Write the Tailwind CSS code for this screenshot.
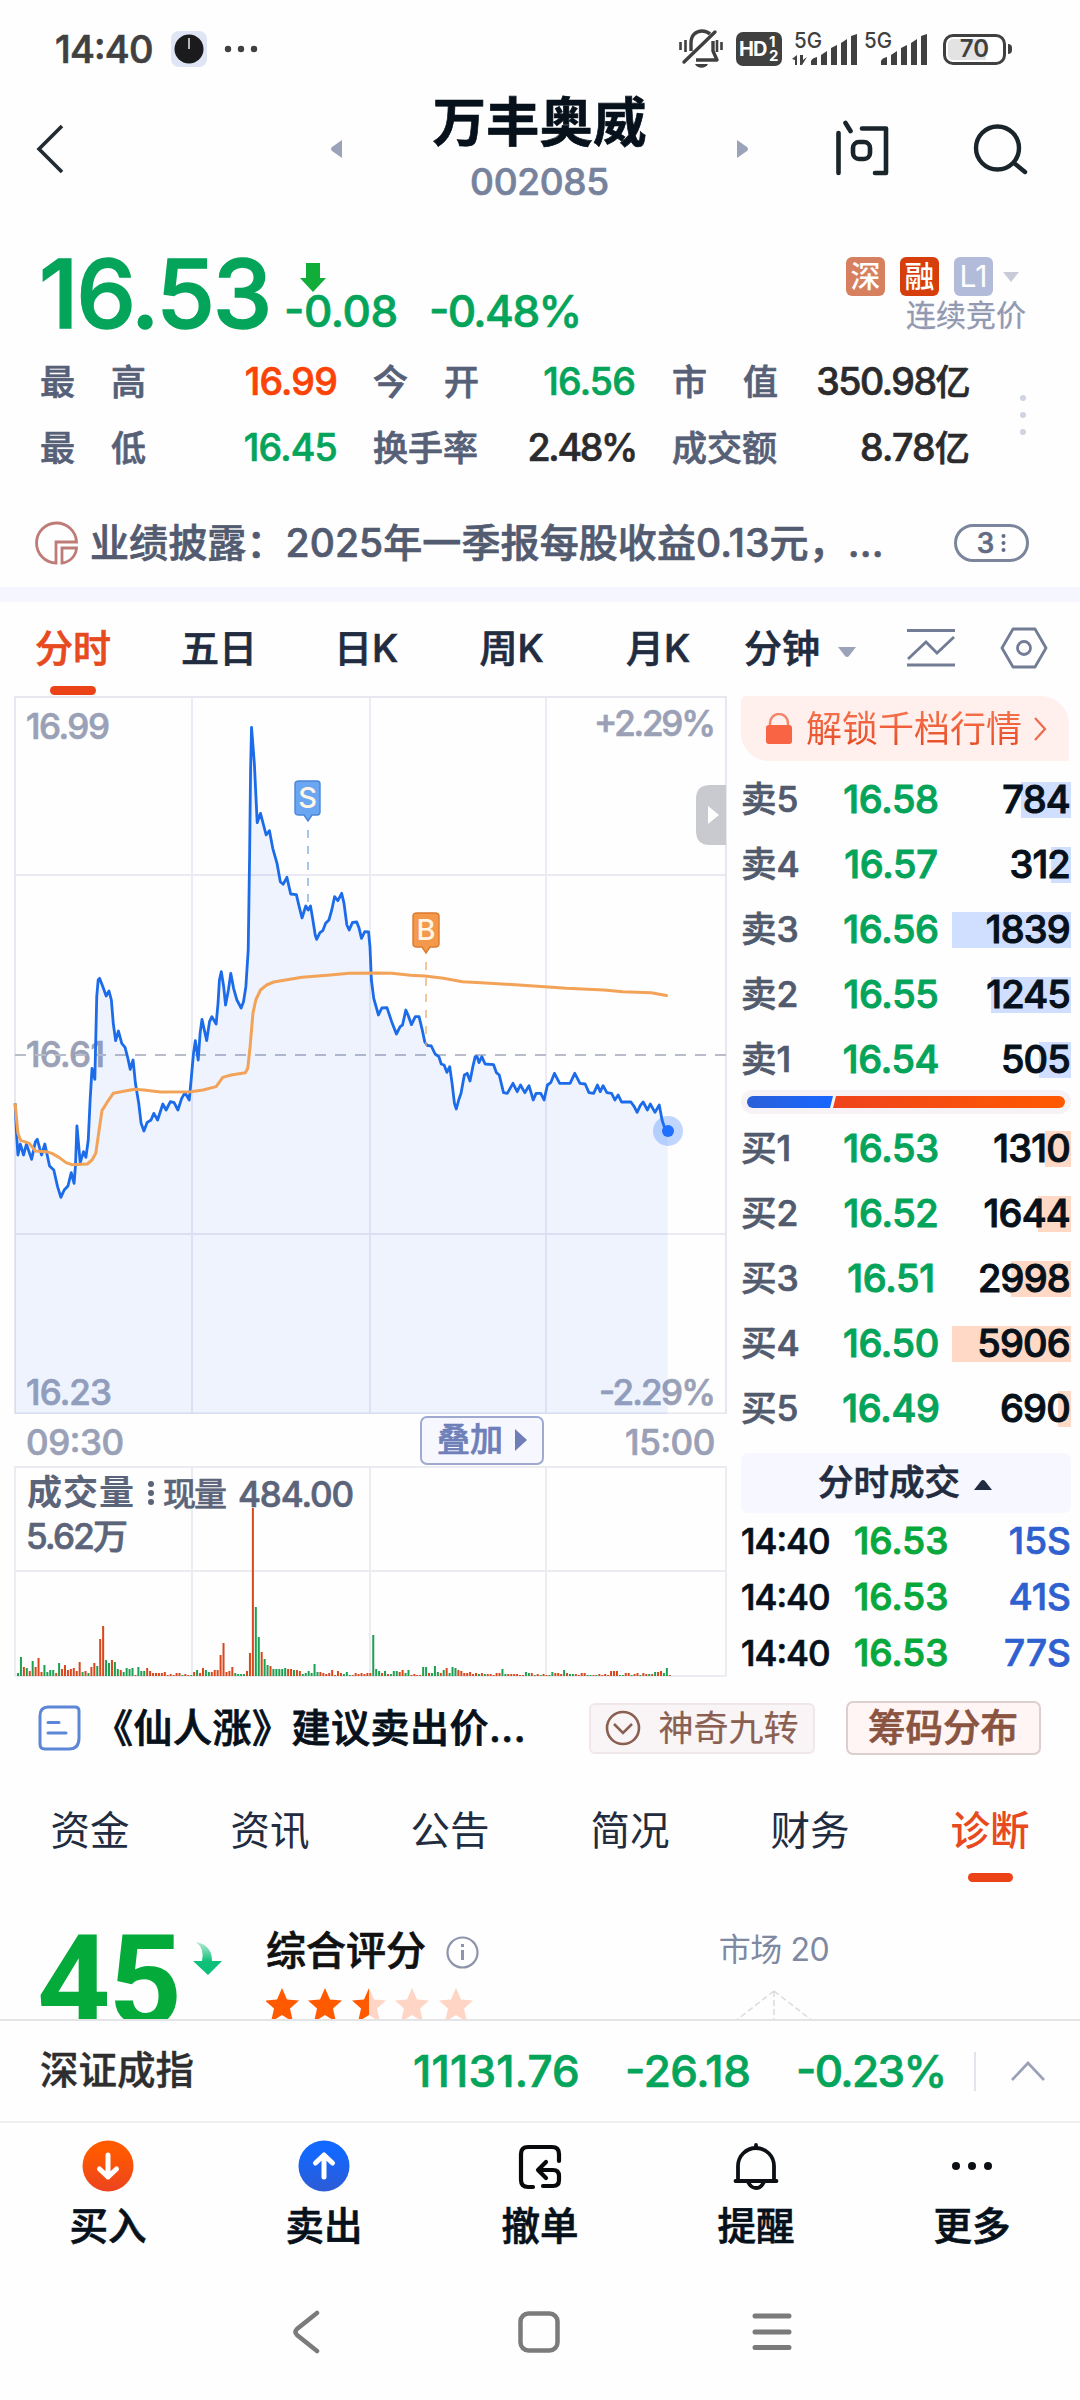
<!DOCTYPE html>
<html lang="zh-CN">
  <head>
    <meta charset="UTF-8" />
    <meta name="viewport" content="width=device-width, initial-scale=1.0" />
    <script src="https://cdn.jsdelivr.net/npm/@tailwindcss/browser@4"></script>
    <title>万丰奥威 002085</title>
  </head>

  <body
    class="w-[1080px] h-[2400px] overflow-hidden bg-[#fefefe] font-['Inter','Noto_Sans_CJK_SC',sans-serif] font-medium [-webkit-text-stroke:0.7px] [font-feature-settings:'case'] text-[#07111b] whitespace-nowrap"
  >
    <!-- Status bar -->
    <div class="h-[98px] pl-[55px] pr-[68px] flex items-center justify-between text-[#404040]">
      <div class="flex items-center">
        <span class="w-[115px] text-[38px] font-medium tracking-[-0.8px]">14:40</span>
        <svg class="w-[38px] h-[38px]" viewBox="0 0 38 38">
          <rect x="1" y="1" width="36" height="36" rx="8" fill="#dfe5f5" />
          <circle cx="19" cy="19" r="14.5" fill="#1b1b1d" />
          <path d="M19 19V8" stroke="#ddd" stroke-width="1.6" />
        </svg>
        <svg class="w-[34px] h-[8px] ml-[16px]" viewBox="0 0 34 8" fill="currentColor">
          <circle cx="4" cy="4" r="3.2" />
          <circle cx="17" cy="4" r="3.2" />
          <circle cx="30" cy="4" r="3.2" />
        </svg>
      </div>
      <div class="flex items-center [-webkit-text-stroke:0px]">
        <svg class="w-[44px] h-[40px]" viewBox="0 0 44 40" fill="none" stroke="currentColor" stroke-width="3.4">
          <path d="M12 22V14C12 6 17 2 23 2c3 0 6 1 8 3M34 12v10l4 9H17" stroke-linejoin="round" />
          <path d="M5 33L36 3" stroke-linecap="round" />
          <path d="M16 35h13c-2 5-11 5-13 0z" fill="currentColor" stroke="none" />
          <path d="M1.5 13v8M6.5 11v12M38 11v12M42.5 13v8" stroke-width="2.6" />
        </svg>
        <div class="w-[46px] h-[34px] ml-[13px] pl-[3px] rounded-[7px] bg-[#404040] text-white flex items-center">
          <span class="w-[30px] text-[20px] font-bold tracking-[-1px]">HD</span>
          <span class="text-[15px] font-bold leading-[14px]">1<br />2</span>
        </div>
        <svg class="w-[66px] h-[36px] ml-[10px] overflow-visible" viewBox="0 0 66 36" fill="currentColor">
          <text x="2" y="17" font-size="22" font-weight="500" textLength="28" lengthAdjust="spacingAndGlyphs">5G</text>
          <path d="M0 28l5-4v10H3v-5zM8 24h3v5l4-3-5 8H8z" />
          <path d="M19 34v-4q1-3 6-4v8zM29 34V24l6-4v14zM39 34V17l6-3v20zM49 34V12l6-4v26zM59 34V5l6-2v31z" />
        </svg>
        <svg class="w-[66px] h-[36px] ml-[4px] overflow-visible" viewBox="0 0 66 36" fill="currentColor">
          <text x="2" y="17" font-size="22" font-weight="500" textLength="28" lengthAdjust="spacingAndGlyphs">5G</text>
          <path d="M19 34v-4q1-3 6-4v8zM29 34V24l6-4v14zM39 34V17l6-3v20zM49 34V12l6-4v26zM59 34V5l6-2v31z" />
        </svg>
        <div class="w-[63px] h-[31px] ml-[15px] rounded-[10px] border-[3px] border-[#404040] flex items-center justify-center text-[24px] font-semibold bg-linear-to-r from-[#e3e3e3] from-70% to-white to-70% bg-clip-content p-[2px]">70</div>
        <div class="w-[4px] h-[10px] ml-[2px] rounded-r bg-[#404040]"></div>
      </div>
    </div>

    <!-- Header -->
    <header class="h-[132px] px-[36px] flex items-start">
      <svg class="w-[28px] h-[50px] mt-[26px]" viewBox="0 0 28 50" fill="none" stroke="#222b31" stroke-width="3.6">
        <path d="M26 2L3 25L26 48" />
      </svg>
      <svg class="w-[12px] h-[18px] mt-[42px] ml-[266px]" viewBox="0 0 12 18" fill="#9ba3b8"><path d="M12 0v18L2 11Q0 9 2 7z" /></svg>
      <div class="w-[395px] flex flex-col items-center">
        <h1 class="text-[53.5px] leading-[54px] mt-[-2px] font-bold">万丰奥威</h1>
        <span class="mt-[10px] text-[37px] leading-[44px] tracking-[-0.3px] text-[#77829d]">002085</span>
      </div>
      <svg class="w-[12px] h-[18px] mt-[42px]" viewBox="0 0 12 18" fill="#9ba3b8"><path d="M0 0v18l10-7Q12 9 10 7z" /></svg>
      <svg class="w-[54px] h-[56px] mt-[22px] ml-[86px]" viewBox="0 0 54 56" fill="none" stroke="#19252b" stroke-width="4.6" stroke-linecap="round" stroke-linejoin="round">
        <path d="M3.5 13v40M10.500 3l5 8M27 8.500h24V53H40" />
        <rect x="18" y="22" width="17" height="17" rx="6" />
      </svg>
      <svg class="w-[56px] h-[52px] mt-[25px] ml-[83px]" viewBox="0 0 56 52" fill="none" stroke="#19252b" stroke-width="4.4" stroke-linecap="round">
        <circle cx="25.5" cy="25" r="21.5" />
        <path d="M42 40l11 9" />
      </svg>
    </header>

    <!-- Quote -->
    <section class="h-[357px] pl-[40px] pr-[52px]">
      <div class="flex h-[114px]">
        <span class="w-[245px] mt-[16px] text-[95px] leading-[95px] font-medium [-webkit-text-stroke:1.5px] tracking-[-2.2px] ml-[-1px] text-[#05a45b]">16.53</span>
        <div class="text-[44px] leading-[44px] text-[#05a45b]">
          <svg class="w-[28px] h-[30px] mt-[33px] ml-[15px]" viewBox="0 0 28 30" fill="#10ad38"><path d="M7 0h14v15h6L14 29L1 15h6z" /></svg>
          <div class="mt-[-4px] flex">
            <span class="w-[145px] tracking-[-0.4px]">-0.08</span><span class="tracking-[-1.6px]">-0.48%</span>
          </div>
        </div>
        <div class="ml-auto mr-[2px] mt-[27px] flex flex-col items-end">
          <div class="h-[39px] flex items-center gap-[15px] text-[30px] text-white [-webkit-text-stroke:0px]">
            <span class="size-[39px] rounded-[6px] bg-[#d6805f] flex items-center justify-center">深</span>
            <span class="size-[39px] rounded-[6px] bg-[#d63e0c] flex items-center justify-center">融</span>
            <span class="size-[39px] rounded-[6px] bg-[#b3bbda] flex items-center justify-center font-normal">L1</span>
            <svg class="w-[16px] h-[10px] -ml-[5px] mr-[7px]" viewBox="0 0 16 10" fill="#c9ccd8"><path d="M0 0h16L8 10z" /></svg>
          </div>
          <span class="mt-[3px] text-[30px] leading-[32px] font-normal [-webkit-text-stroke:0.3px] text-[#9299b1]">连续竞价</span>
        </div>
      </div>
      <div class="flex items-center">
        <div class="w-[929px] grid grid-cols-[298px_298px_333px] text-[35px] leading-[66px] text-[#566077] mt-[5px]">
          <div class="flex justify-between"><span class="w-[106px] flex justify-between"><i class="not-italic">最</i><i class="not-italic">高</i></span><b class="font-medium mr-[1px] text-[37.5px] tracking-[-0.8px] text-[#fb4207]">16.99</b></div>
          <div class="flex justify-between pl-[35px]"><span class="w-[106px] flex justify-between"><i class="not-italic">今</i><i class="not-italic">开</i></span><b class="font-medium mr-[1px] text-[37.5px] tracking-[-0.8px] text-[#05a45b]">16.56</b></div>
          <div class="flex justify-between pl-[36px]"><span class="w-[106px] flex justify-between"><i class="not-italic">市</i><i class="not-italic">值</i></span><b class="font-medium text-[37.5px] tracking-[-1.5px] text-[#2b2b2d]">350.98<i class="not-italic text-[35px]">亿</i></b></div>
          <div class="flex justify-between"><span class="w-[106px] flex justify-between"><i class="not-italic">最</i><i class="not-italic">低</i></span><b class="font-medium mr-[1px] text-[37.5px] tracking-[-0.8px] text-[#05a45b]">16.45</b></div>
          <div class="flex justify-between pl-[35px]"><span>换手率</span><b class="font-medium text-[37.5px] tracking-[-2.3px] text-[#2b2b2d]">2.48%</b></div>
          <div class="flex justify-between pl-[36px]"><span>成交额</span><b class="font-medium text-[37.5px] tracking-[-0.8px] text-[#2b2b2d]">8.78<i class="not-italic text-[35px]">亿</i></b></div>
        </div>
        <div class="ml-auto mr-[2px] mt-[4px] flex flex-col gap-[11px]">
          <i class="size-[6px] rounded-full bg-[#cfd4e2]"></i>
          <i class="size-[6px] rounded-full bg-[#cfd4e2]"></i>
          <i class="size-[6px] rounded-full bg-[#cfd4e2]"></i>
        </div>
      </div>
      <div class="h-[60px] mt-[32px] -ml-[5px] -mr-[1px] flex items-center">
        <svg class="w-[44px] h-[44px]" viewBox="0 0 44 44" fill="none" stroke="#bd7c78" stroke-width="2.8">
          <path d="M21 42A20 20 0 1 1 41.500 21H21z" />
          <path d="M27 27h14.500C41 35 35 41 27 42z" />
        </svg>
        <span class="ml-[11px] text-[39px] tracking-[0.1px] text-[#525b70]">业绩披露：2025年一季报每股收益0.13元，...</span>
        <div class="ml-auto w-[75px] h-[38px] rounded-full border-[3px] border-[#7b859c] flex items-center justify-center gap-[7px] text-[28px] text-[#626c84]">
          3
          <svg class="w-[5px] h-[20px]" viewBox="0 0 5 20" fill="currentColor"><circle cx="2.5" cy="3" r="2" /><circle cx="2.5" cy="10" r="2" /><circle cx="2.5" cy="17" r="2" /></svg>
        </div>
      </div>
    </section>
    <div class="h-[15px] bg-[#f5f6fe]"></div>

    <!-- Period tabs -->
    <nav class="h-[94px] flex items-start text-[38px] leading-[92px] text-[#222c40]">
      <div class="w-[146px] h-full flex flex-col items-center text-[#e84a20]">
        <span class="h-[84px]">分时</span>
        <i class="w-[46px] h-[9px] rounded-full bg-[#ec4218]"></i>
      </div>
      <span class="w-[146px] text-center">五日</span>
      <span class="w-[148px] text-center">日K</span>
      <span class="w-[143px] text-center">周K</span>
      <span class="w-[150px] text-center">月K</span>
      <span class="ml-[11px]">分钟</span>
      <svg class="w-[18px] h-[11px] mt-[45px] ml-[18px]" viewBox="0 0 18 11" fill="#9ba3b8"><path d="M0 0h18l-7 9q-2 2-4 0z" /></svg>
      <svg class="w-[50px] h-[40px] mt-[26px] ml-[50px]" viewBox="0 0 50 40" fill="none" stroke="#727c94" stroke-width="2.8">
        <path d="M1 2.500h48M1 37h48M2 31L20 14l11 11L48 9" />
      </svg>
      <svg class="w-[48px] h-[42px] mt-[25px] ml-[44px]" viewBox="0 0 48 42" fill="none" stroke="#727c94" stroke-width="2.8" stroke-linejoin="round">
        <path d="M13 2h22l11 19L35 40H13L2 21z" />
        <circle cx="24" cy="21" r="6.5" />
      </svg>
    </nav>

    <div class="h-[982px] flex">
      <!-- Charts -->
      <div class="w-[741px]">
        <div class="relative h-[718px]">
          <svg class="w-[741px] h-[718px]" viewBox="0 0 741 718" fill="none">
            <g fill="#9aa1b7" stroke="#9aa1b7" stroke-width="0.7" font-size="35" font-weight="500">
              <text x="26" y="43" textLength="84">16.99</text>
              <text x="26" y="371" textLength="79">16.61</text>
              <text x="26" y="709" textLength="86">16.23</text>
              <text x="594" y="40" textLength="122">+2.29%</text>
              <text x="599" y="709" textLength="117">-2.29%</text>
            </g>
            <path d="M192 0v718M370 0v718M546 0v718M15 179h711M15 538h711" stroke="#e9eaf2" stroke-width="1.8" />
            <rect x="15" y="1" width="711" height="716.5" stroke="#e6e7ef" stroke-width="2" />
            <path d="M15 359h711" stroke="#b9bcc9" stroke-width="2" stroke-dasharray="11 9" />
            <g transform="translate(0 224) scale(0.4719 0.33333)">
              <path id="area" fill="#2a6cff" fill-opacity="0.075" />
              <path id="price" stroke="#1c6be9" stroke-width="2.8" stroke-linejoin="round" vector-effect="non-scaling-stroke" />
              <path id="average" stroke="#f2a358" stroke-width="3" stroke-linejoin="round" vector-effect="non-scaling-stroke" />
            </g>
            <path d="M308 134v76" stroke="#7fb0e2" stroke-width="1.4" stroke-dasharray="8 8" />
            <path d="M426 266v84" stroke="#e8b070" stroke-width="1.4" stroke-dasharray="8 8" />
            <path d="M299 85h18q3 0 3 3v28q0 3-3 3h-5l-4 6l-4-6h-5q-4 0-4-3V88q0-3 4-3z" fill="#6ba6f3" stroke="#4a86d6" stroke-width="1.4" />
            <path d="M417 217h18q4 0 4 3v28q0 3-4 3h-5l-4 6l-4-6h-5q-4 0-4-3v-28q0-3 4-3z" fill="#f4984c" stroke="#dc7a2c" stroke-width="1.4" />
            <g fill="#fff6e6" font-size="29" text-anchor="middle" font-weight="500">
              <text x="307.5" y="112">S</text>
              <text x="426" y="244">B</text>
            </g>
            <circle cx="668" cy="435" r="15" fill="#1f6fff" fill-opacity="0.28" />
            <circle cx="668" cy="435" r="6" fill="#1f6fff" />
            <path d="M726 89h-16q-14 0-14 14v32q0 14 14 14h16z" fill="#c9cacf" />
            <path d="M708 110v18l11-9z" fill="#fff" />
          </svg>
        </div>
        <div class="h-[52px] pl-[26px] pr-[26px] flex items-center justify-between text-[35px] text-[#9aa1b7]">
          <span class="w-[100px] tracking-[-0.4px] mt-[5px]">09:30</span>
          <div class="w-[124px] h-[49px] ml-[223px] rounded-[7px] border-2 border-[#9fa9d2] bg-[#f7f8ff] flex items-center justify-center gap-[12px] text-[33px] text-[#6f7fb8]">
            叠加
            <svg class="w-[12px] h-[22px]" viewBox="0 0 12 22" fill="currentColor"><path d="M0 0v22l12-11z" /></svg>
          </div>
          <span class="w-[100px] text-right tracking-[-0.4px] mt-[5px]">15:00</span>
        </div>
        <svg class="w-[741px] h-[212px]" viewBox="0 0 741 212" fill="none">
          <path d="M15 0v210M192 0v210M370 0v210M546 0v210M726 0v210M15 105h711M15 1h711M15 210h711" stroke="#ebebf1" stroke-width="2" />
          <g fill="#5b6479" font-size="35">
            <text x="27" y="39" font-weight="700" textLength="107">成交量</text>
            <text x="163" y="40" font-size="33" font-weight="500" stroke="#5b6479" stroke-width="0.5" textLength="64">现量</text>
            <text x="238" y="41" font-weight="500" stroke="#5b6479" stroke-width="0.7" textLength="116">484.00</text>
            <text x="26" y="83" font-weight="500" stroke="#5b6479" stroke-width="0.7" textLength="102">5.62万</text>
            <circle cx="151" cy="18" r="3" /><circle cx="151" cy="27" r="3" /><circle cx="151" cy="36" r="3" />
          </g>
          <g id="volume"></g>
        </svg>
      </div>

      <!-- Order book -->
      <div class="w-[330px]">
        <div class="h-[65px] w-[328px] rounded-tr-[28px] rounded-bl-[28px] rounded-tl-[6px] bg-[#ffefed] flex items-center">
          <svg class="w-[28px] h-[32px] ml-[24px]" viewBox="0 0 28 32" fill="none">
            <path d="M5 13V10a9 9 0 0 1 18 0v3" stroke="#f4866b" stroke-width="2.5" />
            <rect x="1" y="12" width="26" height="19" rx="3" fill="#f96544" />
          </svg>
          <span class="ml-[13px] text-[36px] font-normal [-webkit-text-stroke:0px] bg-linear-to-b from-[#f87a55] to-[#e23f12] bg-clip-text text-transparent">解锁千档行情</span>
          <svg class="w-[14px] h-[24px] ml-[11px]" viewBox="0 0 14 24" fill="none" stroke="#ef6a48" stroke-width="2.2"><path d="M2 1l10 11L2 23" /></svg>
        </div>
        <div id="asks" class="mt-[6px]"></div>
        <div class="h-[24px] mt-[-2px] px-[6px] rounded-full bg-[#f6f2f6] flex items-center">
          <svg class="w-[318px] h-[12px]" viewBox="0 0 318 12">
            <defs>
              <linearGradient id="sell"><stop stop-color="#2b5fd9" /><stop offset="1" stop-color="#1766ff" /></linearGradient>
              <linearGradient id="buy"><stop stop-color="#ef431c" /><stop offset="1" stop-color="#ff5a00" /></linearGradient>
            </defs>
            <path d="M6 0h80l-3 12H6A6 6 0 0 1 6 0z" fill="url(#sell)" />
            <path d="M89 0h223a6 6 0 0 1 0 12H86z" fill="url(#buy)" />
          </svg>
        </div>
        <div id="bids" class="mt-[2px]"></div>
        <div class="h-[60px] mt-[12px] rounded-[7px] bg-[#f6f7ff] flex items-center justify-center gap-[14px] text-[35.5px] text-[#222c40]">
          分时成交
          <svg class="w-[18px] h-[10px] mr-[2px] mt-[4px]" viewBox="0 0 18 10" fill="currentColor"><path d="M0 10h18L11 1q-2-2-4 0z" /></svg>
        </div>
        <div id="ticks"></div>
      </div>
    </div>

    <!-- Tip row -->
    <div class="h-[98px] pl-[38px] pr-[39px] pt-[2px] flex items-center">
      <svg class="w-[43px] h-[46px]" viewBox="0 0 43 46" fill="none" stroke="#5c86d6" stroke-width="3">
        <path d="M10 2h27q4 0 4 4v27q0 11-10 11H7q-5 0-5-5V11q0-9 8-9z" />
        <path d="M10 17.500h11M10 28h18" stroke-linecap="round" />
      </svg>
      <span class="ml-[13px] text-[39px] tracking-[0.5px] [-webkit-text-stroke:0.8px]">《仙人涨》建议卖出价...</span>
      <div class="w-[226px] h-[51px] ml-auto rounded-[6px] border-2 border-[#f0e7ea] bg-[#f9f5f6] flex items-center justify-center gap-[17px] text-[35px] font-normal [-webkit-text-stroke:0.2px] text-[#8a5f52]">
        <svg class="w-[36px] h-[36px]" viewBox="0 0 36 36" fill="none" stroke="currentColor" stroke-width="2.6">
          <circle cx="18" cy="18" r="16" />
          <path d="M9 14l9 9l9-9" />
        </svg>
        神奇九转
      </div>
      <div class="w-[195px] h-[54px] ml-[31px] pr-[1px] rounded-[7px] border-2 border-[#dccfcd] bg-[#fef5f4] flex items-center justify-center text-[37.5px] text-[#8a5441]">筹码分布</div>
    </div>

    <!-- Info tabs -->
    <nav class="h-[144px] pt-[9px] grid grid-cols-6 text-center text-[39.5px] leading-[92px] font-normal [-webkit-text-stroke:0px] text-[#222c40]">
      <span>资金</span>
      <span>资讯</span>
      <span>公告</span>
      <span>简况</span>
      <span>财务</span>
      <div class="flex flex-col items-center text-[#e84a20] font-medium">
        <span class="h-[88px]">诊断</span>
        <i class="w-[45px] h-[9px] rounded-full bg-[#ec4218]"></i>
      </div>
    </nav>

    <!-- Diagnosis -->
    <section class="h-[99px] pl-[37px] flex items-start overflow-hidden">
      <span class="w-[156px] font-['Roboto'] text-[128px] leading-[128px] mt-[-2px] font-bold [-webkit-text-stroke:0px] tracking-[-2px] text-[#05ab3a]">45</span>
      <svg class="w-[30px] h-[36px] mt-[21px]" viewBox="0 0 30 36">
        <linearGradient id="fall" x2="0" y2="1"><stop stop-color="#b5ecd4" /><stop offset="0.6" stop-color="#0dbf78" /></linearGradient>
        <path d="M3 1q16 3 16 19h10L15 34L0 20h9Q12 8 3 1z" fill="url(#fall)" />
      </svg>
      <div class="w-[450px] ml-[43px]">
        <div class="h-[67px] flex items-center gap-[20px] text-[40px] text-[#111]">
          <span class="mt-[-5px]">综合评分</span>
          <svg class="w-[33px] h-[33px] mt-[-3px]" viewBox="0 0 33 33" fill="none" stroke="#8d94ac" stroke-width="2.2">
            <circle cx="16.5" cy="16.5" r="15" /><path d="M16.500 14v10M16.500 8v3" stroke-width="3" />
          </svg>
        </div>
        <svg class="w-[212px] h-[36px]" viewBox="0 0 212 36">
          <defs>
            <path id="star" d="M17 0l5 11.500l12 1l-9 8l3 13.500l-11-7l-11 7l3-13.500l-9-8l12-1z" />
            <linearGradient id="half"><stop offset="0.5" stop-color="#ff5a00" /><stop offset="0.5" stop-color="#ffd5c5" /></linearGradient>
          </defs>
          <use href="#star" y="1" x="-1" fill="#ff5a00" />
          <use href="#star" y="1" x="42" fill="#ff5a00" />
          <use href="#star" y="1" x="86" fill="url(#half)" />
          <use href="#star" y="1" x="129" fill="#ffd5c5" />
          <use href="#star" y="1" x="173" fill="#ffd5c5" />
        </svg>
      </div>
      <div class="w-[116px] pt-[4px] flex flex-col items-center">
        <span class="text-[32px] leading-[48px] mt-[2px] font-normal [-webkit-text-stroke:0px] tracking-[-0.4px] text-[#7f89a2]">市场 20</span>
        <svg class="w-[80px] h-[40px] mt-[16px]" viewBox="0 0 80 40" fill="none" stroke="#dcdcde" stroke-width="1.5" stroke-dasharray="6 3">
          <path d="M40 1L0 32M40 1l40 31M40 1v39" />
        </svg>
      </div>
    </section>

    <!-- Index bar -->
    <div class="h-[104px] pl-[40px] pr-[35px] border-t-2 border-[#e4e4e6] border-b-2 border-b-[#f0f0f2] flex items-center">
      <span class="w-[373px] text-[38.5px] [-webkit-text-stroke:0.4px] text-[#2e2e30]">深证成指</span>
      <div class="flex text-[44px] text-[#05a45b]">
        <span class="w-[212px] tracking-[0.2px]">11131.76</span>
        <span class="w-[171px] tracking-[-0.4px]">-26.18</span>
        <span class="tracking-[-1.6px]">-0.23%</span>
      </div>
      <i class="w-[2px] h-[39px] ml-auto bg-[#e2e3ee]"></i>
      <svg class="w-[34px] h-[20px] ml-[35px]" viewBox="0 0 34 20" fill="none" stroke="#9aa1b7" stroke-width="2.6"><path d="M1 19L17 2l16 17" /></svg>
    </div>

    <!-- Trade actions -->
    <div class="h-[160px] pt-[17px] grid grid-cols-5 text-[38.5px] leading-[56px]">
      <div class="flex flex-col items-center">
        <svg class="w-[52px] h-[52px]" viewBox="0 0 52 52" fill="none" stroke="#fff" stroke-width="5" stroke-linecap="round" stroke-linejoin="round">
          <linearGradient id="in" x2="0" y2="1"><stop offset="0.2" stop-color="#ff5a00" /><stop offset="1" stop-color="#ec4320" /></linearGradient>
          <circle cx="26" cy="26" r="25.5" fill="url(#in)" stroke="none" />
          <path d="M26 15v22M17.500 29l8.500 8l8.500-8" />
        </svg>
        <span class="mt-[6px]">买入</span>
      </div>
      <div class="flex flex-col items-center">
        <svg class="w-[52px] h-[52px]" viewBox="0 0 52 52" fill="none" stroke="#fff" stroke-width="5" stroke-linecap="round" stroke-linejoin="round">
          <linearGradient id="out" x2="0" y2="1"><stop offset="0.2" stop-color="#1268ff" /><stop offset="1" stop-color="#2d5bd6" /></linearGradient>
          <circle cx="26" cy="26" r="25.5" fill="url(#out)" stroke="none" />
          <path d="M26 37V15M17.500 23l8.500-8l8.500 8" />
        </svg>
        <span class="mt-[6px]">卖出</span>
      </div>
      <div class="flex flex-col items-center">
        <svg class="w-[52px] h-[52px]" viewBox="0 0 52 52" fill="none" stroke="#07090b" stroke-width="4.2" stroke-linecap="round" stroke-linejoin="round">
          <path d="M19 47H14q-7 0-7-7V14q0-7 7-7h24q7 0 7 7v7M29 46h10q6 0 6-6v-4q0-6-6-6H26M32 22l-8 8l8 8" />
        </svg>
        <span class="mt-[6px]">撤单</span>
      </div>
      <div class="flex flex-col items-center">
        <svg class="w-[52px] h-[52px]" viewBox="0 0 52 52" fill="none" stroke="#0c1015" stroke-width="3.8" stroke-linecap="round">
          <path d="M8 41V26a18 18 0 0 1 36 0V41M5.500 41h41M26 5v3M18 42q3 6 8 6t8-6" />
        </svg>
        <span class="mt-[6px]">提醒</span>
      </div>
      <div class="flex flex-col items-center">
        <svg class="w-[52px] h-[52px]" viewBox="0 0 52 52" fill="#0c1015"><circle cx="10" cy="26" r="4" /><circle cx="26" cy="26" r="4" /><circle cx="42" cy="26" r="4" /></svg>
        <span class="mt-[6px]">更多</span>
      </div>
    </div>

    <!-- System navigation -->
    <div class="h-[97px] pl-[292px] flex items-center">
      <svg class="w-[28px] h-[44px]" viewBox="0 0 28 44" fill="none" stroke="#7b7b7c" stroke-width="4.5" stroke-linecap="round"><path d="M25 3L5 19q-3 3 0 6L25 41" /></svg>
      <svg class="w-[42px] h-[42px] ml-[198px]" viewBox="0 0 42 42" fill="none" stroke="#7b7b7c" stroke-width="4.5"><rect x="2.5" y="2.5" width="37" height="37" rx="8" /></svg>
      <svg class="w-[40px] h-[40px] ml-[192px]" viewBox="0 0 40 40" stroke="#7b7b7c" stroke-width="5" stroke-linecap="round"><path d="M3 4h34M3 20h34M3 35.500h34" /></svg>
    </div>

    <script>
      const price =
        "32,550 35,640 38,705 43,672 50,705 56,672 67,718 75,665 79,658 88,705 95,672 105,738 114,750 122,800 129,832 136,810 144,798 151,758 157,790 160,735 163,618 170,728 177,695 182,712 187,660 191,540 195,445 201,478 205,230 208,180 211,175 218,200 225,228 231,213 236,240 240,310 245,362 251,333 258,370 265,382 271,415 276,448 282,420 287,490 294,550 299,610 305,633 312,607 320,600 326,580 334,600 345,552 352,570 361,545 369,548 377,570 385,535 392,518 401,540 405,480 410,400 414,362 420,420 424,340 428,298 438,362 444,305 449,290 458,312 462,250 465,180 469,155 474,200 478,255 484,210 489,160 495,205 502,240 511,264 516,245 521,200 526,90 529,-200 531,-450 533,-578 539,-470 545,-292 552,-320 564,-255 571,-268 578,-215 587,-170 594,-115 600,-107 608,-128 616,-78 628,-76 634,-40 640,-6 648,-42 653,-30 658,-42 663,0 668,45 671,58 678,38 684,32 690,10 697,0 703,-30 709,-70 716,-58 724,-80 729,-50 735,15 740,30 747,7 756,6 761,25 766,55 773,35 781,36 784,80 787,180 792,235 802,285 809,264 820,263 830,305 840,342 848,320 853,315 860,270 866,290 872,314 880,290 888,290 894,325 900,365 905,376 914,378 922,402 930,410 935,432 941,435 947,457 953,440 958,490 963,550 967,567 972,540 977,520 984,465 990,460 996,483 1002,440 1007,410 1011,410 1015,428 1021,410 1028,432 1046,434 1052,458 1058,465 1067,518 1075,520 1087,490 1096,515 1103,495 1112,518 1121,497 1130,540 1136,520 1146,520 1153,540 1160,495 1167,488 1175,460 1186,490 1208,490 1218,460 1229,490 1240,492 1248,518 1258,520 1266,495 1272,515 1278,497 1286,518 1296,520 1303,540 1310,525 1317,546 1337,546 1344,560 1350,577 1357,556 1363,546 1372,570 1378,552 1388,577 1397,555 1403,600 1408,622 1415,632";
      const average =
        "32,550 38,640 44,662 52,665 62,670 75,693 98,695 110,700 125,712 140,728 152,734 185,732 195,720 203,700 208,650 216,572 228,545 240,520 262,514 285,508 305,510 340,516 405,515 430,510 458,500 472,472 490,465 520,458 525,445 530,380 536,280 542,240 552,210 565,195 580,186 605,180 640,172 700,165 740,160 800,159 830,160 870,166 900,168 940,175 980,185 1020,188 1100,195 1200,205 1280,210 1320,215 1380,218 1415,227";
      document.getElementById("price").setAttribute("d", "M" + price);
      document.getElementById("area").setAttribute("d", "M" + price + " 1415,1482 32,1482z");
      document.getElementById("average").setAttribute("d", "M" + average);

      // Volume per minute: r = up, g = down
      const volume =
        "g3 g19 r9 g8 r5 g15 r9 r18 r4 g11 g4 g6 g6 r3 g13 r7 r11 r6 r7 r8 r5 r14 g4 r5 g3 r9 r13 g10 r37 r50 g16 g13 r16 g14 g7 r6 g4 g8 g7 g8 r1 g9 g5 g5 r8 r5 r3 r3 r3 r3 r4 r1 r2 r1 r3 r3 g1 r2 r1 g1 r4 g6 r3 r8 g6 g4 r4 r6 r6 r21 r33 r4 r5 r9 g3 g2 g2 g2 r5 r23 r168 g69 g39 r24 g17 g11 r10 g7 g7 g7 g7 g8 r7 r7 g6 r6 r5 g2 g3 g5 g3 g12 g4 r4 r3 r2 r3 r6 r1 r5 r3 g2 g4 g1 r1 r3 r2 r3 r2 r3 r3 g41 g7 g5 r3 g5 r2 g2 g5 g5 r4 r6 g3 g6 r1 r2 r1 r1 g9 g9 r3 g3 g10 g4 r3 g6 r8 g3 g9 g8 r6 r5 r3 r3 r4 r2 r3 g2 r3 g2 r2 r2 r1 r3 r3 g7 g2 r2 r2 r2 r2 r1 r1 g4 g3 r3 g1 r2 g1 r2 r1 g1 g4 r3 r3 r2 g6 r3 g2 g2 r2 r1 r3 r3 g1 g1 r1 g1 r2 r1 r2 r1 r5 r5 r5 g1 g1 r3 r3 g1 r2 r3 g1 r3 r2 g2 r2 g4 r4 r5 g3 g8 r1";
      document.getElementById("volume").innerHTML = volume
        .split(" ")
        .map((bar, i) => {
          const height = Number(bar.slice(1));
          const color = bar[0] === "r" ? "#d9481c" : "#1f9f52";
          return `<rect x="${17 + i * 2.936}" y="${210 - height}" width="2" height="${height}" fill="${color}"/>`;
        })
        .join("");

      // Order book rows: label, price, amount, bar width
      const asks = [
        ["卖5", "16.58", 784, 50],
        ["卖4", "16.57", 312, 20],
        ["卖3", "16.56", 1839, 119],
        ["卖2", "16.55", 1245, 80],
        ["卖1", "16.54", 505, 32],
      ];
      const bids = [
        ["买1", "16.53", 1310, 26],
        ["买2", "16.52", 1644, 33],
        ["买3", "16.51", 2998, 60],
        ["买4", "16.50", 5906, 119],
        ["买5", "16.49", 690, 13],
      ];
      const renderRows = (id, rows, barClass) => {
        document.getElementById(id).innerHTML = rows
          .map(
            ([label, value, amount, width]) => `
            <div class="relative h-[65px] flex items-center justify-between text-[38px]">
              <span class="w-[60px] text-[35.5px] text-[#525b6e]">${label}</span>
              <span class="w-[100px] ml-[38px] text-center tracking-[-0.3px] [-webkit-text-stroke:1px] text-[#05a45b]">${value}</span>
              <span class="w-[128px] pr-[1px] text-right tracking-[-0.8px] [-webkit-text-stroke:1px]"><i class="absolute -z-10 right-0 top-[15px] h-[36px] ${barClass}" style="width:${width}px"></i>${amount}</span>
            </div>`
          )
          .join("");
      };
      renderRows("asks", asks, "bg-[#d0deff]");
      renderRows("bids", bids, "bg-[#ffd9c5]");

      const ticks = [
        ["14:40", "16.53", "15S"],
        ["14:40", "16.53", "41S"],
        ["14:40", "16.53", "77S"],
      ];
      document.getElementById("ticks").innerHTML = ticks
        .map(
          ([time, value, amount]) => `
          <div class="h-[56px] flex items-center justify-between text-[37px]">
            <span class="w-[92px] text-[35px] tracking-[-1px]">${time}</span>
            <span class="w-[100px] ml-[4px] [-webkit-text-stroke:1px] text-[#08a83c]">${value}</span>
            <span class="w-[100px] text-right text-[#2f60cf]">${amount}</span>
          </div>`
        )
        .join("");
    </script>
  </body>
</html>
